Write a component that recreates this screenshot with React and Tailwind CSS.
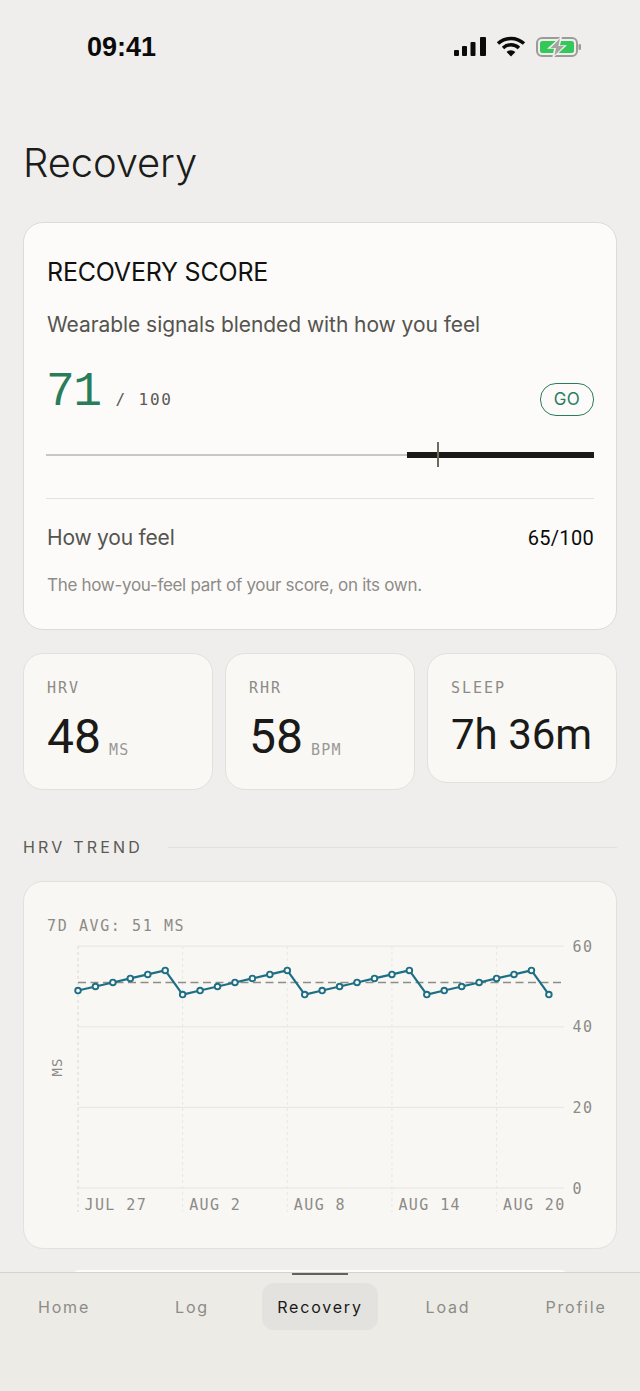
const sans = "font-['Inter',sans-serif]";
const mono = "font-['DejaVu_Sans_Mono',monospace]";
const digits = "font-['Roboto',sans-serif]";

const values = [];
for (let i = 0; i < 28; i++) {
  values.push(i < 6 ? 49 + i : 48 + ((i - 6) % 7));
}
const X0 = 78;
const STEP = 17.44;
const xAt = (i) => X0 + i * STEP;
const yAt = (v) => 1188 - v * 4.03;

function StatusIcons() {
  return (
    <svg width="130" height="22" viewBox="0 0 130 22" className="block">
      <rect x="2" y="14" width="5" height="6" rx="1" fill="#0a0a0a" />
      <rect x="10" y="10" width="5" height="10" rx="1" fill="#0a0a0a" />
      <rect x="18.5" y="6" width="5" height="14" rx="1" fill="#0a0a0a" />
      <rect x="28" y="1" width="6" height="19" rx="1" fill="#0a0a0a" />
      <g fill="none" stroke="#0a0a0a" strokeWidth="3.4">
        <path d="M46 7.6 A19 19 0 0 1 72 7.6" />
        <path d="M51 12 A11.5 11.5 0 0 1 67 12" />
      </g>
      <path d="M59 20.5 L54.6 16 A6.4 6.4 0 0 1 63.4 16 Z" fill="#0a0a0a" />
      <rect x="85" y="2" width="40" height="18" rx="5" fill="none" stroke="#9b9b98" strokeWidth="2" />
      <rect x="88" y="5" width="34" height="12" rx="2.5" fill="#34c759" />
      <path d="M110.5 -1 L95 12.8 L102 12.8 L100 23 L115 9.2 L108 9.2 Z" fill="#efeeec" />
      <path d="M108 2.5 L98.5 12 L104 12 L102.5 19.5 L112 10 L106.4 10 Z" fill="#a3a3a0" />
      <rect x="126.5" y="8" width="2.5" height="6" rx="1.2" fill="#9b9b98" />
    </svg>
  );
}

function Chart() {
  const top = 946;
  const ox = 46;
  const oy = 926;
  const line = values.map((v, i) => `${xAt(i)},${yAt(v)}`).join(" ");
  const verticals = [0, 6, 12, 18, 24];
  const dates = ["JUL 27", "AUG 2", "AUG 8", "AUG 14", "AUG 20"];
  return (
    <svg width="546" height="300" viewBox={`${ox} ${oy} 546 300`} className="block">
      {[60, 40, 20, 0].map((t) => (
        <g key={t}>
          <line x1="78" x2="564" y1={yAt(t)} y2={yAt(t)} stroke="#e6e5e1" strokeWidth="1" />
          <text x="572.5" y={yAt(t) + 5.5} fontSize="15" fill="#8c8b87" letterSpacing="1.4" fontFamily="DejaVu Sans Mono, monospace">{t}</text>
        </g>
      ))}
      {verticals.map((i, k) => (
        <g key={i}>
          <line x1={xAt(i)} x2={xAt(i)} y1={top} y2="1212" stroke={k === 0 ? "#d9d8d4" : "#e8e7e3"} strokeDasharray="3 3" />
          <text x={xAt(i) + 6.5} y="1209.5" fontSize="15" fill="#8c8b87" letterSpacing="1.4" fontFamily="DejaVu Sans Mono, monospace">{dates[k]}</text>
        </g>
      ))}
      <text transform="translate(62 1067) rotate(-90)" textAnchor="middle" fontSize="14" fill="#8c8b87" letterSpacing="1" fontFamily="DejaVu Sans Mono, monospace">MS</text>
      <line x1="78" x2="564" y1={yAt(51)} y2={yAt(51)} stroke="#8f8d88" strokeWidth="1.5" strokeDasharray="8 4.5" />
      <polyline points={line} fill="none" stroke="#1d6f85" strokeWidth="2.2" strokeLinejoin="round" />
      {values.map((v, i) => (
        <circle key={i} cx={xAt(i)} cy={yAt(v)} r="2.8" fill="#f8f7f4" stroke="#1d6f85" strokeWidth="1.9" />
      ))}
    </svg>
  );
}

function Stat({ label, value, unit, small }) {
  return (
    <div className={`flex-1 rounded-[20px] border border-[#e2e1dd] bg-[#f9f8f5] pl-[23px] ${small ? "h-[130px]" : "h-[137px]"}`}>
      <div className={`${mono} mt-[23px] text-[15px] leading-[22px] tracking-[2px] text-[#8c8b87]`}>{label}</div>
      <div className={`flex items-baseline ${small ? "mt-[8px]" : "mt-[9px]"}`}>
        <span className={`${digits} ${small ? "text-[42px] leading-[56px]" : "text-[48px] leading-[58px]"} text-[#1a1a18]`}>{value}</span>
        {unit && <span className={`${mono} ml-2 translate-y-[2px] text-[15px] tracking-[1.2px] text-[#9a9995]`}>{unit}</span>}
      </div>
    </div>
  );
}

export default function App() {
  const tabs = ["Home", "Log", "Recovery", "Load", "Profile"];
  return (
    <div className={`${sans} relative h-[1391px] w-[640px] overflow-hidden bg-[#efeeec]`}>
      <div className="flex h-[94px] items-start justify-between pl-[87px] pr-[58px] pt-[32px]">
        <span className="font-['Liberation_Sans',sans-serif] text-[27px] leading-[30px] font-bold text-[#0a0a0a]">09:41</span>
        <div className="pt-[4px]"><StatusIcons /></div>
      </div>
      <div className="px-[23px]">
        <h1 className="mt-[43px] text-[40px] leading-[52px] font-light tracking-[-0.15px] text-[#1c1c1a]">Recovery</h1>
        <section className="mt-[33px] h-[408px] rounded-[20px] border border-[#dcdbd7] bg-[#fcfbf9] px-[22px]">
          <div className="ml-px pt-[33px] text-[25px] leading-[32px] font-normal tracking-[-0.2px] text-[#111110]">RECOVERY SCORE</div>
          <div className="ml-px mt-[21px] text-[21px] leading-[32px] tracking-[-0.06px] text-[#55544f]">Wearable signals blended with how you feel</div>
          <div className="mt-[21px] flex items-end justify-between">
            <div className="flex items-baseline">
              <span className="font-['Liberation_Mono',monospace] text-[48px] leading-[60px] tracking-[-1.5px] text-[#2a7d5a]">71</span>
              <span className={`${mono} ml-[15px] text-[16px] tracking-[1.8px] text-[#5a5955]`}>/ 100</span>
            </div>
            <span className="mb-[6px] flex h-[33px] w-[54px] items-center justify-center rounded-[16px] border border-[#2a7d5a] text-[17px] tracking-[0.5px] text-[#2a7d5a]">GO</span>
          </div>
          <div className="relative mt-[30px] flex h-[6px] items-center">
            <div className="h-[2px] w-[361px] bg-[#c8c7c3]" />
            <div className="h-[6px] flex-1 bg-[#1a1a18]" />
            <div className="absolute left-[391px] top-[-10px] h-[25px] w-[1.5px] bg-[#6c6b5f]" />
          </div>
          <div className="mt-[40px] h-px bg-[#e2e1dd]" />
          <div className="mt-[23px] flex items-center justify-between">
            <span className="ml-px text-[21px] leading-[32px] tracking-[-0.2px] text-[#55544f]">How you feel</span>
            <span className={`${digits} text-[20px] font-normal tracking-[0.3px] text-[#0a0a0a]`}>65/100</span>
          </div>
          <div className="ml-px mt-[18px] text-[17px] leading-[26px] tracking-[-0.3px] text-[#8c8b87]">The how-you-feel part of your score, on its own.</div>
        </section>
        <div className="mt-[23px] flex items-start gap-3">
          <Stat label="HRV" value="48" unit="MS" />
          <Stat label="RHR" value="58" unit="BPM" />
          <Stat label="SLEEP" value="7h 36m" small />
        </div>
        <div className="mt-[45px] flex items-center gap-[25px]">
          <span className="text-[16px] leading-[24px] tracking-[3.2px] text-[#5a5955]">HRV TREND</span>
          <div className="h-px flex-1 bg-[#e2e1dd]" />
        </div>
        <section className="mt-[22px] h-[368px] rounded-[20px] border border-[#e2e1dd] bg-[#f8f7f4] px-[22px]">
          <div className={`${mono} ml-px pt-[33px] text-[15px] leading-[22px] tracking-[1.6px] text-[#8c8b87]`}>7D AVG: 51 MS</div>
          <div className="mt-[-11px]"><Chart /></div>
        </section>
        <div className="mx-[50px] mt-[21px] h-[40px] rounded-t-[6px] bg-[#fdfcfa]" />
      </div>
      <nav className="absolute inset-x-0 bottom-0 h-[119px] border-t border-[#d3d2ce] bg-[#ecebe6]">
        <div className="absolute left-[292px] top-0 h-[2px] w-[56px] bg-[#63625e]" />
        <div className="grid grid-cols-5 pt-[10px]">
          {tabs.map((t) => (
            <div key={t} className="flex justify-center">
              <div className={`flex h-[47px] items-center justify-center rounded-[12px] pt-[1px] text-[16px] tracking-[1.8px] ${t === "Recovery" ? "w-[116px] bg-[#e3e2de] text-[#1a1a18]" : "text-[#8c8b87]"}`}>{t}</div>
            </div>
          ))}
        </div>
      </nav>
    </div>
  );
}
